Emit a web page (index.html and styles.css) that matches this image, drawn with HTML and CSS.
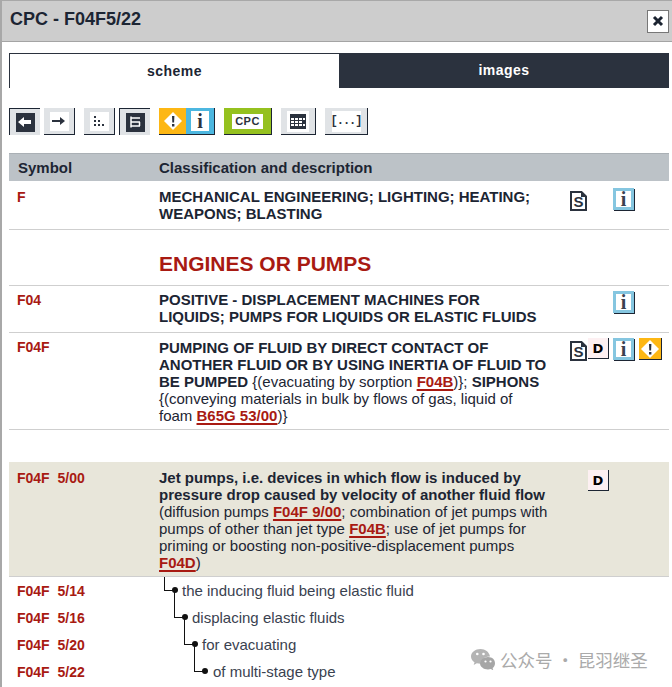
FILE: index.html
```html
<!DOCTYPE html>
<html lang="en">

<head>
    <meta charset="UTF-8">
    <meta name="viewport" content="width=device-width, initial-scale=1.0">
    <title>CPC - F04F5/22</title>
    <link rel="stylesheet" href="styles.css">
</head>

<body>
<div class="window">

    <div class="titlebar">
        <h1>CPC - F04F5/22</h1>
        <button class="close" aria-label="close">
            <svg width="12" height="12" viewBox="0 0 12 12"><path d="M2 2l8 8M10 2l-8 8" stroke="#1b2330" stroke-width="3"/></svg>
        </button>
    </div>

    <div class="content">
        <div class="tabs">
            <div class="tab tab-on">scheme</div>
            <div class="tab tab-off">images</div>
        </div>

        <div class="toolbar">
            <div class="tool tool-pressed"><span class="tool-face tool-dark"><svg width="14" height="12" viewBox="0 0 14 12"><path d="M0 6l6-5v3h7v4H6v3z" fill="#fff"/></svg></span></div>
            <div class="tool tool-after"><span class="tool-face"><svg width="14" height="12" viewBox="0 0 14 12"><path d="M0 5h8V2l5 4-5 4V7H0z" fill="#2b323e"/></svg></span></div>
            <div class="tool tool-gap"><span class="tool-face"><svg width="12" height="12" viewBox="0 0 12 12"><path d="M1 1h2v2H1zM1 5h2v2H1zM5 5h2v2H5zM1 9h2v2H1zM5 9h2v2H5zM9 9h2v2H9z" fill="#2b323e"/></svg></span></div>
            <div class="tool tool-pressed tool-after"><span class="tool-face tool-dark"><svg width="14" height="14" viewBox="0 0 14 14"><path d="M3 1.500v11M3 3h9M3 7h9M3 11h9M11.500 7v4" stroke="#fff" stroke-width="1.500" fill="none"/></svg></span></div>
            <div class="tool-pair tool-gap">
                <span class="badge-warn"><svg width="20" height="20" viewBox="0 0 20 20"><path d="M10 1l9 9-9 9-9-9z" fill="#fff"/><path d="M9 5h2.400l-.3 6.500H9.300zM9 13h2.400v2.400H9z" fill="#2b323e"/></svg></span><span class="badge-info"><span class="i-glyph">i</span></span>
            </div>
            <div class="tool tool-cpc tool-gap"><span class="cpc-label">CPC</span></div>
            <div class="tool tool-wide tool-gap"><span class="tool-face tool-face-wide"><svg width="16" height="15" viewBox="0 0 16 15"><path d="M0 0h16v15H0z" fill="#2b323e"/><path d="M1 4h3v2H1zM5 4h3v2H5zM9 4h3v2H9zM13 4h2v2h-2zM1 7h3v2H1zM5 7h3v2H5zM9 7h3v2H9zM1 10h3v2H1zM5 10h3v2H5zM9 10h3v2H9zM13 10h2v2h-2z" fill="#fff"/></svg></span></div>
            <div class="tool tool-dots tool-gap"><span class="tool-face tool-face-dots">[...]</span></div>
        </div>

        <div class="table">
            <div class="row row-head">
                <div>Symbol</div>
                <div>Classification and description</div>
            </div>

            <div class="row row-f">
                <div class="symbol">F</div>
                <div class="desc"><b>MECHANICAL ENGINEERING; LIGHTING; HEATING; WEAPONS; BLASTING</b></div>
                <div class="icons">
                    <svg class="ic-s" width="17" height="20" viewBox="0 0 17 20"><path d="M1 1H11.500L16 5.500V19H1z" fill="#fff" stroke="#2b323e" stroke-width="2"/><path d="M11 0L17 6H11z" fill="#2b323e"/><text x="8.500" y="16" text-anchor="middle">S</text></svg><span></span><span class="ic-i">i</span>
                </div>
            </div>

            <div class="row row-title">
                <div></div>
                <div class="section-title">ENGINES OR PUMPS</div>
            </div>

            <div class="row row-f04">
                <div class="symbol">F04</div>
                <div class="desc"><b>POSITIVE - DISPLACEMENT MACHINES FOR LIQUIDS; PUMPS FOR LIQUIDS OR ELASTIC FLUIDS</b></div>
                <div class="icons">
                    <span></span><span></span><span class="ic-i">i</span>
                </div>
            </div>

            <div class="row row-f04f">
                <div class="symbol">F04F</div>
                <div class="desc"><b>PUMPING OF FLUID BY DIRECT CONTACT OF ANOTHER FLUID OR BY USING INERTIA OF FLUID TO BE PUMPED</b> {(evacuating by sorption <a href="#">F04B</a>)}; <b>SIPHONS</b> {(conveying materials in bulk by flows of gas, liquid of foam <a href="#">B65G 53/00</a>)}</div>
                <div class="icons">
                    <svg class="ic-s" width="17" height="20" viewBox="0 0 17 20"><path d="M1 1H11.500L16 5.500V19H1z" fill="#fff" stroke="#2b323e" stroke-width="2"/><path d="M11 0L17 6H11z" fill="#2b323e"/><text x="8.500" y="16" text-anchor="middle">S</text></svg><span class="ic-d">D</span><span class="ic-i">i</span><span class="ic-w"><svg width="20" height="20" viewBox="0 0 20 20"><path d="M10 1l9 9-9 9-9-9z" fill="#fff"/><path d="M9 5h2.400l-.3 6.500H9.300zM9 13h2.400v2.400H9z" fill="#2b323e"/></svg></span>
                </div>
            </div>

            <div class="row row-current">
                <div class="symbol">F04F 5/00</div>
                <div class="desc"><b>Jet pumps, i.e. devices in which flow is induced by pressure drop caused by velocity of another fluid flow</b> (diffusion pumps <a href="#">F04F 9/00</a>; combination of jet pumps with pumps of other than jet type <a href="#">F04B</a>; use of jet pumps for priming or boosting non-positive-displacement pumps <a href="#">F04D</a>)</div>
                <div class="icons">
                    <span></span><span class="ic-d">D</span>
                </div>
            </div>

            <div class="row row-child">
                <div class="symbol">F04F 5/14</div>
                <div class="child child-1"><i class="tree"></i>the inducing fluid being elastic fluid</div>
            </div>
            <div class="row row-child">
                <div class="symbol">F04F 5/16</div>
                <div class="child child-2"><i class="tree"></i>displacing elastic fluids</div>
            </div>
            <div class="row row-child">
                <div class="symbol">F04F 5/20</div>
                <div class="child child-3"><i class="tree"></i>for evacuating</div>
            </div>
            <div class="row row-child">
                <div class="symbol">F04F 5/22</div>
                <div class="child child-4"><i class="tree"></i>of multi-stage type</div>
            </div>
        </div>
    </div>

    <div class="watermark">
        <svg width="25" height="21" viewBox="0 0 25 21"><path d="M9.500 0C4.300 0 0 3.300 0 7.500c0 2.400 1.400 4.400 3.500 5.800L2.700 16l3.100-1.700c1.200.3 2.400.5 3.700.5-.3-3.600 3.200-7.600 9.500-7.400C18.200 3 14.200 0 9.500 0z" fill="#b4b4b4"/><path d="M17 8c-4.400 0-8 2.800-8 6.200s3.600 6.200 8 6.200c1 0 1.900-.1 2.800-.4l2.500 1.300-.7-2.200c1.500-1.200 2.400-3 2.400-4.900C24 10.800 21.400 8 17 8z" fill="#a6a6a6"/><circle cx="6.300" cy="5" r="1.300" fill="#fff"/><circle cx="12.500" cy="5" r="1.300" fill="#fff"/><circle cx="14.500" cy="12.500" r="1.100" fill="#fff"/><circle cx="19.500" cy="12.500" r="1.100" fill="#fff"/></svg>
        <span>公众号 · 昆羽继圣</span>
    </div>
</div>
</body>

</html>
```

FILE: styles.css
```css
html, body {
    margin: 0;
    padding: 0;
    height: 100%;
    background-color: white;
}

body {
    font-family: "Liberation Sans", Arial, sans-serif;
    font-size: 15px;
    color: #1c2533;
    overflow: hidden;
}

.window {
    position: relative;
    height: 687px;
    border-left: 2px solid #a8a8a8;
    border-top: 1px solid #a8a8a8;
    box-sizing: border-box;
}

.titlebar {
    height: 40px;
    background-color: #cdcdcd;
    border-bottom: 1px solid #a4a4a4;
    display: flex;
    align-items: center;
    justify-content: space-between;
    padding: 0 3px 0 8px;
}

.titlebar h1 {
    margin: 0 0 4px 0;
    font-size: 18px;
    font-weight: bold;
    color: #1c2533;
}

.close {
    width: 22px;
    height: 23px;
    padding: 0;
    background-color: white;
    border: 1px solid #777;
    display: flex;
    align-items: center;
    justify-content: center;
}

.content {
    padding: 11px 3px 0 7px;
}

/* tabs */
.tabs {
    display: flex;
    height: 35px;
}

.tab {
    width: 330px;
    text-align: center;
    font-size: 14px;
    font-weight: bold;
    line-height: 35px;
    letter-spacing: 0.5px;
}

.tab-on {
    background-color: white;
    border-top: 1px solid #2b323e;
    border-left: 1px solid #2b323e;
    box-sizing: border-box;
    line-height: 35px;
}

.tab-off {
    background-color: #2b323e;
    color: white;
}

/* toolbar */
.toolbar {
    display: flex;
    height: 27px;
    margin-top: 20px;
}

.tool {
    width: 31px;
    height: 27px;
    box-sizing: border-box;
    background-color: #e0e3e6;
    border-right: 1px solid #1c2533;
    border-bottom: 1px solid #1c2533;
    display: flex;
    align-items: center;
    justify-content: center;
}

.tool-pressed {
    border: 0;
    border-top: 1px solid #1c2533;
    border-left: 1px solid #1c2533;
}

.tool-after {
    margin-left: 4px;
}

.tool-gap {
    margin-left: 9px;
}

.tool-face {
    width: 19px;
    height: 19px;
    background-color: white;
    display: flex;
    align-items: center;
    justify-content: center;
}

.tool-dark {
    background-color: #2b323e;
}

.tool-pair {
    display: flex;
    height: 27px;
    border-bottom: 1px solid #1c2533;
    border-right: 1px solid #1c2533;
    box-sizing: border-box;
}

.badge-warn {
    width: 27px;
    background-color: #fdb714;
    display: flex;
    align-items: center;
    justify-content: center;
}

.badge-info {
    width: 28px;
    background-color: #4cb7e0;
    display: flex;
    align-items: center;
    justify-content: center;
}

.i-glyph {
    width: 18px;
    height: 20px;
    background-color: white;
    text-align: center;
    font-family: "Liberation Serif", serif;
    font-weight: bold;
    font-size: 20px;
    line-height: 20px;
    color: #2b323e;
}

.tool-cpc {
    width: 48px;
    background-color: #95c11f;
}

.cpc-label {
    background-color: white;
    color: #2b323e;
    width: 31px;
    text-align: center;
    font-weight: bold;
    font-size: 11px;
    line-height: 15px;
    letter-spacing: 0.5px;
}

.tool-wide {
    width: 35px;
}

.tool-dots {
    width: 43px;
}

.tool-face-wide {
    width: 22px;
    height: 21px;
}

.tool-face-dots {
    width: 29px;
    height: 21px;
    font-family: "Liberation Mono", monospace;
    font-size: 12px;
    font-weight: bold;
    letter-spacing: -1px;
    color: #2b323e;
}

/* classification table */
.table {
    margin-top: 18px;
}

.row {
    display: grid;
    grid-template-columns: 142px 411px 1fr;
    padding-left: 8px;
    border-bottom: 1px solid #cfcfcf;
    box-sizing: border-box;
}

.row-head {
    height: 28px;
    align-items: center;
    background-color: #bcc2c7;
    border-top: 1px solid #aab0b5;
    border-bottom: 0;
    font-size: 15px;
    font-weight: bold;
    grid-template-columns: 141px 1fr;
    padding-left: 9px;
}

.symbol {
    color: #a81a12;
    font-size: 14px;
    line-height: 17px;
    padding-top: 1px;
    font-weight: bold;
    word-spacing: 4px;
}

.row-f04f .symbol {
    padding-top: 0;
}

.desc {
    line-height: 17px;
    padding-right: 21px;
}

.row-f {
    height: 49px;
    padding-top: 7px;
}

.row-title {
    height: 56px;
    padding-top: 22px;
}

.section-title {
    color: #a81a12;
    font-size: 21px;
    font-weight: bold;
    line-height: 23px;
}

.row-f04 {
    height: 47px;
    padding-top: 5px;
}

.row-f04f {
    height: 97px;
    padding-top: 6px;
    margin-bottom: 32px;
}

.row-current {
    height: 115px;
    padding-top: 7px;
    background-color: #e8e6da;
    border-top: 0;
}

.desc a {
    color: #a81a12;
    font-weight: bold;
    text-decoration: underline;
    text-decoration-thickness: 2px;
    text-underline-offset: 2px;
}

.icons {
    display: grid;
    grid-template-columns: 18px 25px 26px 24px;
    align-items: start;
}

.ic-d, .ic-i, .ic-w {
    display: flex;
    align-items: center;
    justify-content: center;
    box-sizing: border-box;
    font-weight: bold;
    margin-top: -1px;
}

.ic-s {
    margin-top: 2px;
}

.row-f .ic-s {
    margin-top: 3px;
}

.row-f .ic-i, .row-f04 .ic-i {
    margin-top: 0;
}

.ic-s text {
    font-size: 15px;
    font-weight: bold;
    fill: #2b323e;
}

.ic-d {
    width: 21px;
    height: 21px;
    background-color: #fdf0f2;
    border-right: 1px solid #1c2533;
    border-bottom: 1px solid #1c2533;
    color: black;
    font-family: "DejaVu Sans", sans-serif;
    font-size: 13px;
}

.row-current .ic-d {
    margin-top: 1px;
}

.ic-i {
    width: 21px;
    height: 22px;
    background-color: white;
    border: 3px solid #85c6e0;
    box-shadow: 1px 1px 0 #1c2533;
    font-family: "Liberation Serif", serif;
    font-size: 20px;
    color: #3a4250;
}

.ic-w {
    width: 23px;
    height: 22px;
    background-color: #fdb714;
    border-right: 1px solid #1c2533;
    border-bottom: 1px solid #1c2533;
}

.row-child {
    height: 27px;
    align-items: center;
    border-bottom: 0;
}

.child {
    position: relative;
    line-height: 17px;
    color: #3a4250;
}

.child-1 { padding-left: 23px; }
.child-2 { padding-left: 33px; }
.child-3 { padding-left: 43px; }
.child-4 { padding-left: 54px; }

/* tree connector, reaches up into the row above */
.tree {
    position: absolute;
    top: -18px;
    width: 10px;
    height: 26px;
    border-left: 1px solid #111;
    border-bottom: 1px solid #111;
}

.tree::after {
    content: "";
    position: absolute;
    right: -3px;
    bottom: -3px;
    width: 6px;
    height: 6px;
    border-radius: 50%;
    background-color: #111;
}

.child-1 .tree { left: 5px; top: -5px; height: 13px; }
.child-2 .tree { left: 15px; }
.child-3 .tree { left: 25px; }
.child-4 .tree { left: 35px; }

.watermark {
    position: absolute;
    left: 469px;
    top: 646px;
    display: flex;
    align-items: center;
    gap: 4px;
    font-family: "Noto Sans CJK SC", sans-serif;
    font-size: 17.500px;
    color: #aaaaaa;
    white-space: nowrap;
}
```
